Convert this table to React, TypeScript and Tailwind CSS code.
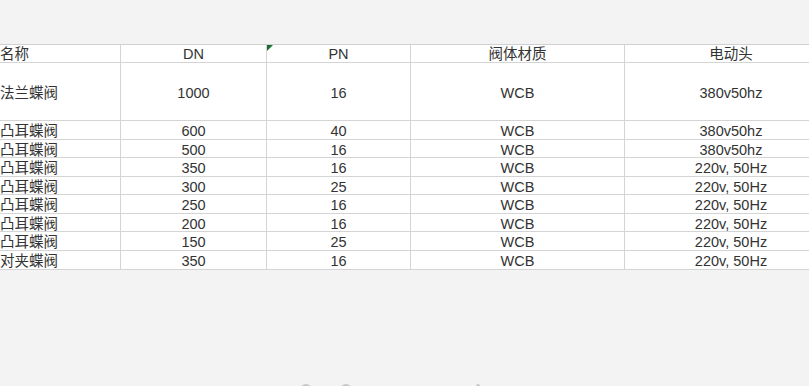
import React from 'react';

interface ValveRow {
  name: string;
  dn: string;
  pn: string;
  material: string;
  motor: string;
  height: string;
}

const rows: ValveRow[] = [
  { name: '法兰蝶阀', dn: '1000', pn: '16', material: 'WCB', motor: '380v50hz', height: 'h-[58px]' },
  { name: '凸耳蝶阀', dn: '600', pn: '40', material: 'WCB', motor: '380v50hz', height: 'h-[19px]' },
  { name: '凸耳蝶阀', dn: '500', pn: '16', material: 'WCB', motor: '380v50hz', height: 'h-[18px]' },
  { name: '凸耳蝶阀', dn: '350', pn: '16', material: 'WCB', motor: '220v, 50Hz', height: 'h-[19px]' },
  { name: '凸耳蝶阀', dn: '300', pn: '25', material: 'WCB', motor: '220v, 50Hz', height: 'h-[18px]' },
  { name: '凸耳蝶阀', dn: '250', pn: '16', material: 'WCB', motor: '220v, 50Hz', height: 'h-[19px]' },
  { name: '凸耳蝶阀', dn: '200', pn: '16', material: 'WCB', motor: '220v, 50Hz', height: 'h-[18px]' },
  { name: '凸耳蝶阀', dn: '150', pn: '25', material: 'WCB', motor: '220v, 50Hz', height: 'h-[19px]' },
  { name: '对夹蝶阀', dn: '350', pn: '16', material: 'WCB', motor: '220v, 50Hz', height: 'h-[19px]' },
];

const cell = 'flex items-center pt-[3px] border-b border-[#d4d4d4] leading-none';
const head = 'flex items-end pb-[1px] h-[18px] border-b border-[#d4d4d4] leading-none';

export default function App() {
  return (
    <div
      className="h-[386px] w-[809px] overflow-hidden bg-[#f3f3f3] flex flex-col text-[14.5px] text-[#333333]"
      style={{ fontFamily: '"Liberation Sans", "Noto Sans CJK SC", sans-serif' }}
    >
      {/* Sheet */}
      <div className="mt-[44px] grid grid-cols-[121px_146px_144px_214px_212px] bg-white border-t border-[#d0d0d0]">
        {/* Header */}
        <div className={`${head} border-r`}>名称</div>
        <div className={`${head} border-r justify-center`}>DN</div>
        <div className={`${head} border-r justify-center relative`}>
          <span className="absolute left-0 top-0 w-0 h-0 border-t-[6px] border-r-[6px] border-t-[#1b6e2e] border-r-transparent" />
          PN
        </div>
        <div className={`${head} border-r justify-center`}>阀体材质</div>
        <div className={`${head} justify-center`}>电动头</div>

        {rows.map((r, i) => (
          <React.Fragment key={i}>
            <div className={`${cell} ${r.height} border-r`}>{r.name}</div>
            <div className={`${cell} ${r.height} border-r justify-center`}>{r.dn}</div>
            <div className={`${cell} ${r.height} border-r justify-center`}>{r.pn}</div>
            <div className={`${cell} ${r.height} border-r justify-center`}>{r.material}</div>
            <div className={`${cell} ${r.height} justify-center`}>{r.motor}</div>
          </React.Fragment>
        ))}
      </div>

      {/* Toolbar peeking in at the bottom edge */}
      <div className="mt-auto flex items-start pl-[300px] -mb-[14px]">
        <div className="w-[12px] h-[16px] rounded-full border-2 border-[#c8c8c8]" />
        <div className="ml-[28px] w-[12px] h-[16px] rounded-full border-2 border-[#c8c8c8]" />
        <div className="ml-[124px] w-[4px] h-[16px] rounded-full bg-[#c8c8c8]" />
      </div>
    </div>
  );
}
